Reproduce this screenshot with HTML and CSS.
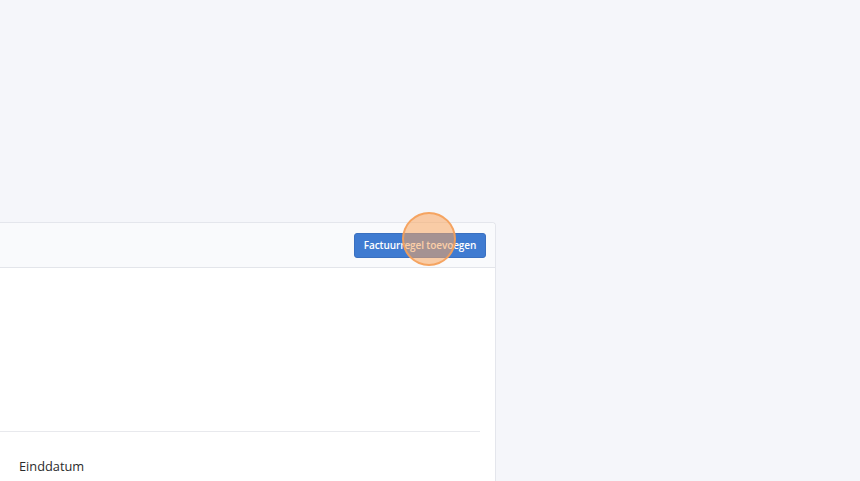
FILE: index.html
```html
<!DOCTYPE html>
<html lang="nl">
<head>
    <meta charset="UTF-8">
    <meta name="viewport" content="width=device-width, initial-scale=1.0">
    <title>Factuur</title>
    <link rel="stylesheet" href="styles.css">
</head>
<body>
    <div class="page">
        <section class="card">
            <div class="card-header">
                <button class="btn-primary" type="button">Factuurregel toevoegen</button>
                <span class="click-marker"></span>
            </div>
            <div class="card-body">
                <div class="lines"></div>
                <div class="field">
                    <label>Einddatum</label>
                </div>
            </div>
        </section>
    </div>
</body>
</html>
```

FILE: styles.css
```css
* {
    margin: 0;
    padding: 0;
    box-sizing: border-box;
}

html, body {
    height: 100%;
}

body {
    background: #f5f6fa;
    font-family: "Source Sans Pro", "Open Sans", sans-serif;
    color: #333;
    overflow: hidden;
}

.page {
    height: 100%;
    padding-top: 222px;
    overflow: hidden;
}

.card {
    width: 521px;
    margin-left: -25px;
    height: 259px;
    background: white;
    border: 1px solid #e4e6ec;
    border-bottom: none;
    border-radius: 4px 4px 0 0;
}

.card-header {
    position: relative;
    display: flex;
    justify-content: flex-end;
    align-items: center;
    height: 45px;
    padding: 0 9px;
    background: #f9fafc;
    border-bottom: 1px solid #e3e5ea;
    border-radius: 4px 4px 0 0;
}

.btn-primary {
    width: 132px;
    height: 25px;
    background: #3f7bd1;
    border: 1px solid #3a70c0;
    border-radius: 3px;
    color: white;
    font-family: "Open Sans", sans-serif;
    font-size: 10px;
    font-weight: 600;
    letter-spacing: -0.1px;
}

.click-marker {
    position: absolute;
    left: 426px;
    top: -11px;
    width: 54px;
    height: 54px;
    border-radius: 50%;
    border: 2px solid rgba(245, 160, 90, 0.9);
    background: rgba(250, 165, 95, 0.55);
}

.card-body {
    padding: 0 15px 0 24px;
}

.lines {
    height: 164px;
    border-bottom: 1px solid #e8e9ed;
}

.field {
    padding: 22px 0 0 19px;
}

.field label {
    font-size: 12.8px;
    color: #2b2b2b;
}
```
